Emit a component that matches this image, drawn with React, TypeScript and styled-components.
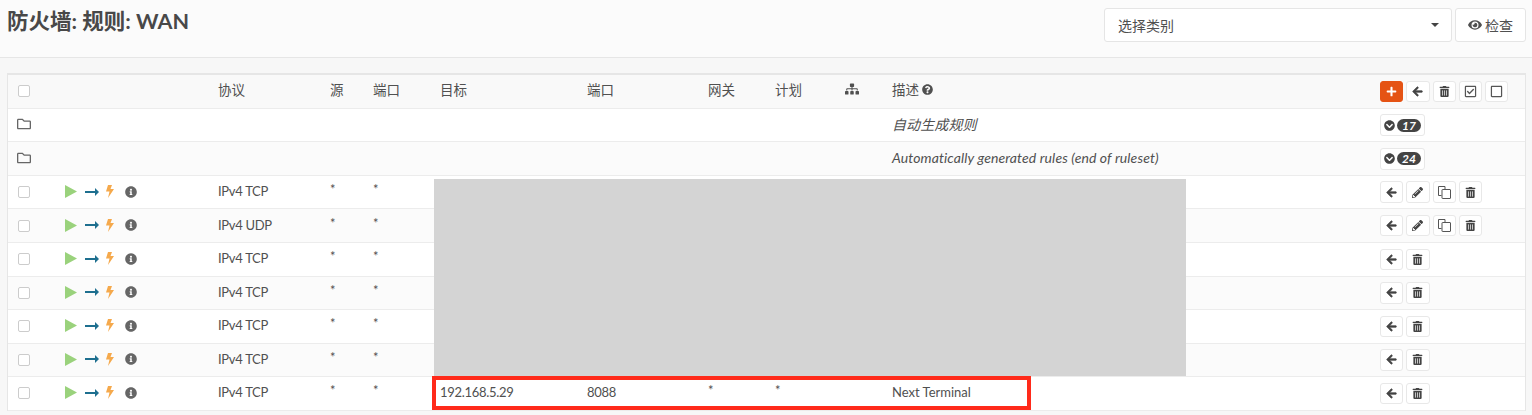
import React, { FC } from 'react';
import styled, { createGlobalStyle } from 'styled-components';
import {
  FaArrowLeft,
  FaChevronCircleDown,
  FaEye,
  FaInfoCircle,
  FaPencilAlt,
  FaPlus,
  FaQuestionCircle,
  FaRegCheckSquare,
  FaRegFolder,
  FaRegSquare,
  FaSitemap,
  FaTrashAlt,
} from 'react-icons/fa';

const COLUMNS = '51px 153px 112px 43px 67px 147px 121px 67px 70px 47px 488px 1fr';
const FONT = `Lato, 'Noto Sans CJK SC', sans-serif`;

const GlobalStyle = createGlobalStyle`
  html, body {
    margin: 0;
    padding: 0;
    background: #f7f7f7;
    overflow: hidden;
  }
  body {
    font-family: ${FONT};
    font-size: 13px;
    color: #505050;
  }
`;

const PageHeader = styled.header`
  display: flex;
  justify-content: space-between;
  box-sizing: content-box;
  height: 49px;
  padding: 8px 6px 0 7px;
  background: #fbfbfb;
  border-bottom: 1px solid #e6e6e6;
`;

const Title = styled.h1`
  margin: -1px 0 0;
  font-size: 21.5px;
  line-height: 28px;
  font-weight: 700;
  color: #484848;
`;

const HeaderControls = styled.div`
  display: flex;
  gap: 3px;
  height: 34px;
`;

const CategorySelect = styled.div`
  display: flex;
  align-items: center;
  justify-content: space-between;
  width: 348px;
  box-sizing: border-box;
  padding: 0 12px 0 13px;
  background: #fff;
  border: 1px solid #e5e5e5;
  border-radius: 3px;
  font-size: 14px;
`;

const Caret = styled.span`
  width: 0;
  height: 0;
  border-left: 4px solid transparent;
  border-right: 4px solid transparent;
  border-top: 4px solid #444;
`;

const InspectButton = styled.button`
  display: flex;
  align-items: center;
  gap: 3px;
  width: 71px;
  box-sizing: border-box;
  padding: 0 0 0 12px;
  background: #fff;
  border: 1px solid #e5e5e5;
  border-radius: 3px;
  color: #505050;
  font-family: ${FONT};
  font-size: 14px;
`;

const Card = styled.section`
  position: relative;
  margin: 15px 6px 0 7px;
  background: #fff;
  border: solid #e6e6e6;
  border-width: 2px 1px 0;
`;

const Row = styled.div<{ $head?: boolean; $alt?: boolean }>`
  display: grid;
  grid-template-columns: ${COLUMNS};
  align-items: center;
  height: ${p => (p.$head ? '33.8px' : '33.55px')};
  box-sizing: border-box;
  border-bottom: 1px solid #ececec;
  background: ${p => (p.$head ? '#f9f9f9' : p.$alt ? '#fbfbfb' : '#fff')};
`;

const Cell = styled.div<{ $tight?: boolean }>`
  padding: 0 0 2px 6px;
  white-space: nowrap;
  display: flex;
  align-items: center;
  letter-spacing: ${p => (p.$tight ? '-0.3px' : 'normal')};
`;

const HeadCell = styled(Cell)`
  padding-bottom: 4px;
  font-size: 13.5px;
  gap: 3px;
`;

const NoteCell = styled(Cell)`
  font-size: 14px;
  font-style: italic;
  letter-spacing: 0.11px;
`;

const CheckCell = styled.div`
  padding-left: 10px;
  display: flex;
  align-items: center;
`;

const Check = styled.span`
  display: block;
  width: 12px;
  height: 12px;
  box-sizing: border-box;
  border: 1px solid #ccc;
  border-radius: 2px;
  background: #fff;
`;

const FolderIcon = styled(FaRegFolder)`
  width: 14px;
  height: 14px;
  color: #666;
  margin: -2px 0 0 -1px;
`;

const Star = styled.span`
  position: relative;
  top: -2px;
`;

const StatusIcons = styled.div`
  display: flex;
  align-items: center;
  padding: 0 0 1px 6px;
  height: 14px;
`;

const PlayGlyph = styled.svg`
  width: 12px;
  height: 13px;
  fill: #9ad27c;
  margin-right: 8px;
`;

const ArrowGlyph = styled.svg`
  width: 14px;
  height: 8px;
  fill: #1e6f8f;
  margin-right: 7px;
`;

const BoltGlyph = styled.svg`
  width: 8px;
  height: 13px;
  fill: #f5a94c;
  margin-right: 11px;
`;

const InfoIcon = styled(FaInfoCircle)`
  width: 12px;
  height: 12px;
  color: #666;
`;

const Actions = styled.div`
  display: flex;
  gap: 3px;
  padding-left: 6px;
`;

const ActionButton = styled.button<{ $primary?: boolean }>`
  display: flex;
  align-items: center;
  justify-content: center;
  width: 23.3px;
  height: 21.5px;
  padding: 0;
  background: ${p => (p.$primary ? '#e55314' : '#fff')};
  border: 1px solid ${p => (p.$primary ? '#e55314' : '#e8e8e8')};
  border-radius: 3px;
  color: ${p => (p.$primary ? '#fff' : '#444')};
  font-size: 11px;
`;

const BackIcon = styled(FaArrowLeft)`
  stroke: currentColor;
  stroke-width: 30;
`;

const BoxIcon = styled.span`
  display: flex;
  color: #555;
  font-size: 13px;
`;

const CountButton = styled.button`
  display: flex;
  align-items: center;
  gap: 2px;
  width: 45px;
  height: 22px;
  padding: 0 0 0 3px;
  box-sizing: border-box;
  background: #fff;
  border: 1px solid #e8e8e8;
  border-radius: 3px;
  color: #444;
  font-size: 11px;
`;

const Badge = styled.span`
  display: block;
  width: 24px;
  height: 13px;
  border-radius: 7px;
  background: #444;
  color: #fff;
  font-family: ${FONT};
  font-style: italic;
  font-weight: 700;
  font-size: 12px;
  line-height: 13px;
  text-align: center;
`;

// covers the blanked out rule details in the screenshot
const Redaction = styled.div`
  position: absolute;
  left: 426px;
  top: 104px;
  width: 752px;
  height: 197px;
  background: #d4d4d4;
`;

const Highlight = styled.div`
  position: absolute;
  left: 424px;
  top: 301px;
  width: 599px;
  height: 33.5px;
  box-sizing: border-box;
  border: 4px solid #ff2a1a;
`;

const CopyGlyph: FC = () => (
  <svg width="13" height="13" viewBox="0 0 13 13" fill="none" stroke="#555" strokeWidth="1">
    <path d="M3.5 9.5H.5V.5h6.5v3" />
    <rect x="4" y="3.5" width="8.5" height="9" rx="0.5" />
  </svg>
);

const StatusCell: FC = () => (
  <StatusIcons>
    <PlayGlyph viewBox="0 0 12 13">
      <path d="M0 0l12 6.5L0 13z" />
    </PlayGlyph>
    <ArrowGlyph viewBox="0 0 14 8">
      <path d="M0 3h10V0l4 4-4 4V5H0z" />
    </ArrowGlyph>
    <BoltGlyph viewBox="0 0 8 13">
      <path d="M2 0h4L4.500 4H8L2 13l1.500-6.500H0z" />
    </BoltGlyph>
    <InfoIcon />
  </StatusIcons>
);

const rules = [
  { proto: 'IPv4 TCP', full: true },
  { proto: 'IPv4 UDP', full: true },
  { proto: 'IPv4 TCP', full: false },
  { proto: 'IPv4 TCP', full: false },
  { proto: 'IPv4 TCP', full: false },
  { proto: 'IPv4 TCP', full: false },
  {
    proto: 'IPv4 TCP',
    full: false,
    dest: '192.168.5.29',
    port: '8088',
    gateway: '*',
    schedule: '*',
    desc: 'Next Terminal',
  },
];

const groups = [
  { label: '自动生成规则', count: 17 },
  { label: 'Automatically generated rules (end of ruleset)', count: 24 },
];

export default function App() {
  return (
    <>
      <GlobalStyle />
      <PageHeader>
        <Title>防火墙: 规则: WAN</Title>
        <HeaderControls>
          <CategorySelect>
            选择类别
            <Caret />
          </CategorySelect>
          <InspectButton>
            <FaEye size={14} />
            检查
          </InspectButton>
        </HeaderControls>
      </PageHeader>
      <Card>
        <Row $head>
          <CheckCell>
            <Check />
          </CheckCell>
          <div />
          <HeadCell>协议</HeadCell>
          <HeadCell>源</HeadCell>
          <HeadCell>端口</HeadCell>
          <HeadCell>目标</HeadCell>
          <HeadCell>端口</HeadCell>
          <HeadCell>网关</HeadCell>
          <HeadCell>计划</HeadCell>
          <HeadCell>
            <FaSitemap size={14} />
          </HeadCell>
          <HeadCell>
            描述
            <FaQuestionCircle size={11} />
          </HeadCell>
          <Actions>
            <ActionButton $primary>
              <FaPlus />
            </ActionButton>
            <ActionButton>
              <BackIcon />
            </ActionButton>
            <ActionButton>
              <FaTrashAlt />
            </ActionButton>
            <ActionButton>
              <BoxIcon>
                <FaRegCheckSquare />
              </BoxIcon>
            </ActionButton>
            <ActionButton>
              <BoxIcon>
                <FaRegSquare />
              </BoxIcon>
            </ActionButton>
          </Actions>
        </Row>
        {groups.map((g, i) => (
          <Row key={g.count} $alt={i % 2 === 1}>
            <CheckCell>
              <FolderIcon />
            </CheckCell>
            <div />
            <Cell />
            <Cell />
            <Cell />
            <Cell />
            <Cell />
            <Cell />
            <Cell />
            <Cell />
            <NoteCell>{g.label}</NoteCell>
            <Actions>
              <CountButton>
                <FaChevronCircleDown size={11} />
                <Badge>{g.count}</Badge>
              </CountButton>
            </Actions>
          </Row>
        ))}
        {rules.map((r, i) => (
          <Row key={i} $alt={i % 2 === 1}>
            <CheckCell>
              <Check />
            </CheckCell>
            <StatusCell />
            <Cell $tight>{r.proto}</Cell>
            <Cell>
              <Star>*</Star>
            </Cell>
            <Cell>
              <Star>*</Star>
            </Cell>
            <Cell $tight>{r.dest}</Cell>
            <Cell $tight>{r.port}</Cell>
            <Cell>{r.gateway && <Star>{r.gateway}</Star>}</Cell>
            <Cell>{r.schedule && <Star>{r.schedule}</Star>}</Cell>
            <Cell />
            <Cell>{r.desc}</Cell>
            <Actions>
              <ActionButton>
                <BackIcon />
              </ActionButton>
              {r.full && (
                <ActionButton>
                  <FaPencilAlt />
                </ActionButton>
              )}
              {r.full && (
                <ActionButton>
                  <CopyGlyph />
                </ActionButton>
              )}
              <ActionButton>
                <FaTrashAlt />
              </ActionButton>
            </Actions>
          </Row>
        ))}
        <Redaction />
        <Highlight />
      </Card>
    </>
  );
}
